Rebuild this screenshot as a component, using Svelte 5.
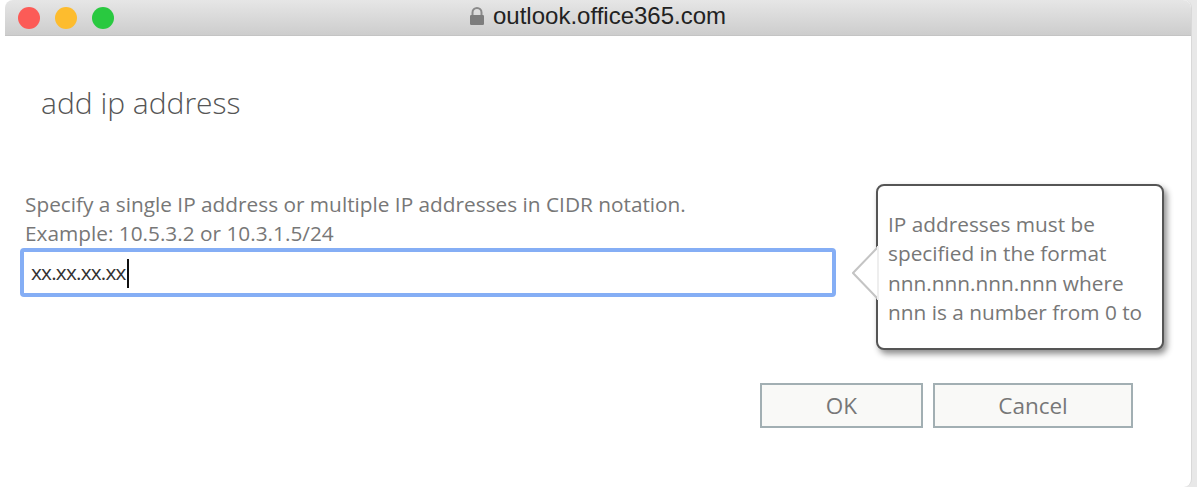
<script>
  let value = 'xx.xx.xx.xx';
</script>

<div class="desktop">
  <div class="window">
    <div class="titlebar">
      <div class="lights">
        <span class="light red"></span>
        <span class="light yellow"></span>
        <span class="light green"></span>
      </div>
      <div class="url">
        <svg width="16" height="18" viewBox="0 0 16 18" aria-hidden="true">
          <path d="M3.5 9V5.5a4.5 4.5 0 0 1 9 0V9" fill="none" stroke="#8a8a8a" stroke-width="2" />
          <rect x="1" y="8" width="14" height="10" rx="1.2" fill="#7d7d7d" />
        </svg>
        <span>outlook.office365.com</span>
      </div>
    </div>

    <div class="body">
      <h1>add ip address</h1>

      <div class="form-row">
        <div class="field">
          <p class="hint">Specify a single IP address or multiple IP addresses in CIDR notation.<br />Example: 10.5.3.2 or 10.3.1.5/24</p>
          <div class="input">{value}<i class="caret"></i></div>
        </div>

        <div class="callout">
          <svg class="arrow" width="27" height="54" viewBox="0 0 27 54" aria-hidden="true">
            <path d="M26 1 L1 27 L26 53 Z" fill="#fff" />
            <path d="M26 1 L1 27 L26 53" fill="none" stroke="#c4c4c4" stroke-width="2" />
            <path d="M26 0 V54" stroke="#eeeeee" stroke-width="2" />
          </svg>
          <p>IP addresses must be specified in the format nnn.nnn.nnn.nnn where nnn is a number from 0 to</p>
        </div>
      </div>

      <div class="actions">
        <button class="ok">OK</button>
        <button class="cancel">Cancel</button>
      </div>
    </div>
  </div>
</div>

<style>
  :global(body) {
    margin: 0;
    background: #fff;
  }
  .desktop {
    width: 1197px;
    height: 487px;
    overflow: hidden;
    background: linear-gradient(to right, #fff 1180px, #e8e8e8 1180px);
    padding-left: 5px;
    box-sizing: border-box;
  }
  .window {
    width: 1187px;
    height: 487px;
    box-sizing: border-box;
    background: #fff;
    border-right: 1px solid #d8d8d8;
    border-radius: 8px;
    font-family: "Open Sans", "Noto Sans", sans-serif;
  }
  .titlebar {
    height: 35px;
    border-bottom: 1px solid #c4c4c4;
    border-radius: 8px 8px 0 0;
    background: linear-gradient(#e6e6e6, #cdcdcd);
    display: flex;
    align-items: center;
    position: relative;
  }
  .lights {
    display: flex;
    gap: 15px;
    padding-left: 13px;
  }
  .light {
    width: 22px;
    height: 22px;
    border-radius: 50%;
  }
  .red {
    background: #fc5b57;
  }
  .yellow {
    background: #fdbc2e;
  }
  .green {
    background: #29c940;
  }
  .url {
    position: absolute;
    left: 464px;
    top: 2px;
    display: flex;
    align-items: center;
    gap: 8px;
    font-family: "Liberation Sans", Arial, sans-serif;
    font-size: 24px;
    line-height: 28px;
    color: #222;
  }
  .body {
    padding: 0 0 0 15px;
  }
  h1 {
    margin: 0;
    padding: 47px 0 0 21px;
    font-size: 30px;
    line-height: 40px;
    font-weight: 300;
    color: #555;
  }
  .form-row {
    display: flex;
    margin-top: 61px;
    height: 166px;
  }
  .field {
    width: 816px;
    padding-top: 6px;
  }
  .hint {
    margin: 0 0 0 5px;
    font-size: 20.8px;
    line-height: 29px;
    color: #777;
    white-space: nowrap;
  }
  .input {
    height: 41px;
    line-height: 41px;
    border: 4px solid #85aef5;
    border-radius: 4px;
    padding-left: 7px;
    font-size: 20.8px;
    letter-spacing: -0.8px;
    color: #333;
  }
  .caret {
    display: inline-block;
    width: 2px;
    height: 29px;
    background: #111;
    vertical-align: -8px;
    margin-left: 1px;
  }
  .callout {
    position: relative;
    margin-left: 40px;
    width: 288px;
    height: 166px;
    box-sizing: border-box;
    border: 2px solid #555;
    border-radius: 8px;
    background: #fff;
    box-shadow: 3px 4px 6px rgba(0, 0, 0, 0.45);
  }
  .callout p {
    margin: 0;
    padding: 24px 14px 0 10px;
    font-size: 20.8px;
    line-height: 29.4px;
    color: #777;
  }
  .arrow {
    position: absolute;
    left: -26px;
    top: 60px;
  }
  .actions {
    display: flex;
    justify-content: flex-end;
    gap: 10px;
    margin-top: 33px;
    padding-right: 58px;
  }
  button {
    height: 45px;
    border: 2px solid #a2afb3;
    background: #f9f9f7;
    font-family: inherit;
    font-size: 22.5px;
    color: #777;
    padding: 0;
  }
  .ok {
    width: 163px;
  }
  .cancel {
    width: 200px;
  }
</style>
